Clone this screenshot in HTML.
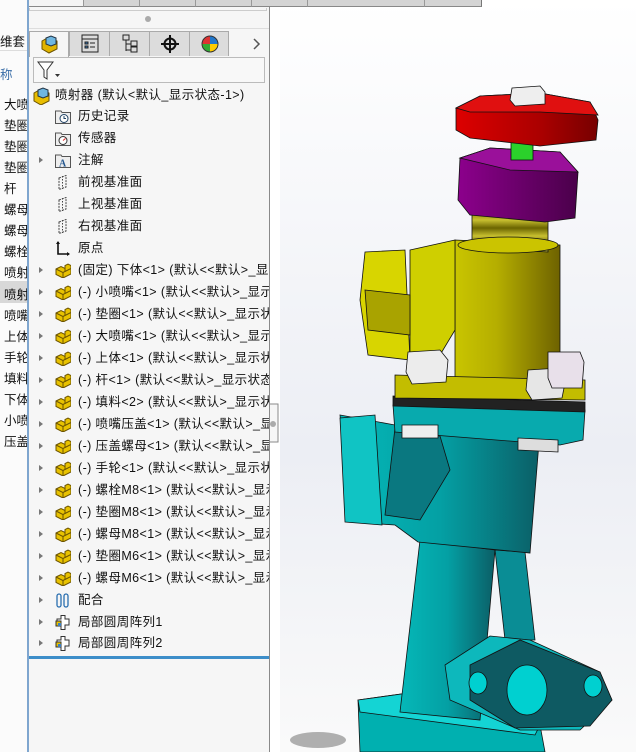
<!DOCTYPE html>
<html><head><meta charset="utf-8">
<style>
*{margin:0;padding:0;box-sizing:border-box}
body{width:636px;height:752px;overflow:hidden;position:relative;background:#fff;font-family:"Liberation Sans","Noto Sans CJK SC",sans-serif;font-size:12px;color:#111}
#strip{position:absolute;left:0;top:0;width:27px;height:752px;background:#fbfbfb;overflow:hidden}
#strip div{position:absolute;left:4px;white-space:nowrap;font-size:12.5px}
#sline{position:absolute;left:27px;top:0;width:2px;height:752px;background:#7fa6cf}
#panel{position:absolute;left:29px;top:0;width:241px;height:752px;background:#f6f6f6;border-right:1px solid #8a8a8a;overflow:hidden}
.tabtop{position:absolute;top:0;height:7px;background:#d4d4d4;border-right:1px solid #999;border-bottom:1px solid #888;z-index:5}
.row{position:absolute;left:0;height:20px;width:240px;white-space:nowrap;line-height:20px;font-size:12.5px;letter-spacing:.4px}
.row .ar{position:absolute;left:10px;top:7px;width:0;height:0;border-left:4px solid #777;border-top:3.5px solid transparent;border-bottom:3.5px solid transparent}
.row .ic{position:absolute;left:26px;top:3px;width:16px;height:15px}
.row .tx{position:absolute;left:49px;top:0}
</style></head><body>
<div id="strip">
<div style="top:31px;left:0">维套</div>
<div style="top:50px;left:0;width:27px;border-top:1px solid #ddd"></div>
<div style="top:64px;left:0;color:#3a6ea8">称</div>
<div style="top:94px">大喷</div><div style="top:115px">垫圈</div><div style="top:136px">垫圈</div><div style="top:157px">垫圈</div>
<div style="top:178px">杆</div><div style="top:199px">螺母</div><div style="top:220px">螺母</div><div style="top:241px">螺栓</div>
<div style="top:262px">喷射</div>
<div style="top:281px;left:0;width:27px;height:22px;background:#d8d8d8"></div>
<div style="top:284px">喷射</div><div style="top:305px">喷嘴</div><div style="top:326px">上体</div><div style="top:347px">手轮</div>
<div style="top:368px">填料</div><div style="top:389px">下体</div><div style="top:410px">小喷</div><div style="top:431px">压盖</div>
</div>
<div id="sline"></div>
<div id="panel">
 <div style="position:absolute;left:0;top:8px;width:238px;height:3px;border:1px solid #ccc;border-top:none"></div>
 <div style="position:absolute;left:116px;top:16px;width:6px;height:6px;border-radius:50%;background:#aaa"></div>
 <div style="position:absolute;left:0;top:28px;width:240px;height:1px;background:#ddd"></div>
 <div style="position:absolute;left:40px;top:31px;width:160px;height:25px;background:#dcdcdc;border:1px solid #aaa;border-bottom:none"></div>
 <div style="position:absolute;left:0;top:31px;width:40px;height:26px;background:#f6f6f6;border:1px solid #aaa;border-bottom:none"></div>
 <div style="position:absolute;left:80px;top:31px;width:1px;height:25px;background:#aaa"></div>
 <div style="position:absolute;left:120px;top:31px;width:1px;height:25px;background:#aaa"></div>
 <div style="position:absolute;left:160px;top:31px;width:1px;height:25px;background:#aaa"></div>
 <svg style="position:absolute;left:0;top:31px" width="240" height="26">
  <g transform="translate(12,4)"><path d="M1 6 L8 2 L16 6 L16 14 L8 18 L1 14Z" fill="#e0b400" stroke="#6a5200"/><path d="M5 3 L10 1 L15 3 L15 9 L10 11 L5 9Z" fill="#6fb6e0" stroke="#234"/></g>
  <g transform="translate(53,4)" stroke="#222" fill="none"><rect x="0" y="0" width="16" height="17"/><path d="M0 4H16"/><rect x="3" y="7" width="3" height="2" fill="#3a7fc0"/><path d="M8 8H13"/><rect x="3" y="11" width="3" height="2" fill="#3a7fc0"/><path d="M8 12H13"/></g>
  <g transform="translate(93,4)" stroke="#222" fill="none"><rect x="1" y="0" width="6" height="5"/><path d="M4 5V16M4 9H9M4 15H9"/><rect x="9" y="6" width="6" height="5"/><rect x="9" y="12" width="6" height="5"/></g>
  <g transform="translate(133,4)" stroke="#111" stroke-width="2" fill="none"><circle cx="8" cy="9" r="5.5"/><path d="M8 0V18M-1 9H17"/></g>
  <g transform="translate(172,4)"><circle cx="9" cy="9" r="8" fill="#d33"/><path d="M9 9 L1 9 A8 8 0 0 0 9 17Z" fill="#3a3"/><path d="M9 9 L9 17 A8 8 0 0 0 17 9Z" fill="#fc0"/><path d="M9 9L9 1 A8 8 0 0 1 17 9Z" fill="#27c"/><circle cx="9" cy="9" r="8" fill="none" stroke="#333"/></g>
  <path d="M225 8 L230 13 L225 18" stroke="#555" stroke-width="1.5" fill="none"/>
 </svg>
 <div style="position:absolute;left:4px;top:57px;width:232px;height:26px;border:1px solid #bbb;background:#f8f8f8"></div>
 <svg style="position:absolute;left:8px;top:61px" width="26" height="20"><path d="M1 1H16L10 9V18L7 16V9Z" fill="#fff" stroke="#333"/><path d="M18 13L23 13L20.5 16Z" fill="#333"/></svg>

 <div class="row" style="top:85px"><svg style="position:absolute;left:4px;top:2px" width="18" height="18"><path d="M1 6 L8 2 L16 6 L16 14 L8 18 L1 14Z" fill="#e8bd00" stroke="#6a5200"/><path d="M5 3 L10 1 L15 3 L15 9 L10 11 L5 9Z" fill="#6fb6e0" stroke="#234"/></svg><span class="tx" style="left:26px">喷射器 (默认&lt;默认_显示状态-1&gt;)</span></div>
 <div class="row" style="top:106px"><svg class="ic" viewBox="0 0 16 15"><path d="M0.5 2H6L7 3.5H15.5V14.5H0.5Z" fill="#eee" stroke="#555"/><circle cx="9" cy="9.5" r="4" fill="#fff" stroke="#246"/><path d="M9 7V9.5H11" stroke="#246" fill="none"/></svg><span class="tx">历史记录</span></div>
 <div class="row" style="top:128px"><svg class="ic" viewBox="0 0 16 15"><path d="M0.5 2H6L7 3.5H15.5V14.5H0.5Z" fill="#eee" stroke="#555"/><circle cx="8" cy="9.5" r="4" fill="#fff" stroke="#333"/><path d="M8 9.5L10.5 7.5" stroke="#d22"/></svg><span class="tx">传感器</span></div>
 <div class="row" style="top:150px"><i class="ar"></i><svg class="ic" viewBox="0 0 16 15"><path d="M0.5 2H6L7 3.5H15.5V14.5H0.5Z" fill="#eee" stroke="#555"/><text x="4" y="13.5" font-size="10" font-weight="bold" fill="#25578f" font-family="Liberation Serif">A</text></svg><span class="tx">注解</span></div>
 <div class="row" style="top:172px"><svg class="ic" viewBox="0 0 16 15"><path d="M4 3 L11 0.5 V12 L4 14.5Z" fill="none" stroke="#444" stroke-dasharray="2 1"/><path d="M7.5 1V14" stroke="#444" stroke-dasharray="1.5 1.5"/></svg><span class="tx">前视基准面</span></div>
 <div class="row" style="top:194px"><svg class="ic" viewBox="0 0 16 15"><path d="M4 3 L11 0.5 V12 L4 14.5Z" fill="none" stroke="#444" stroke-dasharray="2 1"/><path d="M7.5 1V14" stroke="#444" stroke-dasharray="1.5 1.5"/></svg><span class="tx">上视基准面</span></div>
 <div class="row" style="top:216px"><svg class="ic" viewBox="0 0 16 15"><path d="M4 3 L11 0.5 V12 L4 14.5Z" fill="none" stroke="#444" stroke-dasharray="2 1"/><path d="M7.5 1V14" stroke="#444" stroke-dasharray="1.5 1.5"/></svg><span class="tx">右视基准面</span></div>
 <div class="row" style="top:238px"><svg class="ic" viewBox="0 0 16 15"><path d="M3 1V13H14" stroke="#111" stroke-width="1.6" fill="none"/><path d="M1 3L3 0 5 3M12 11L15 13 12 15" fill="#111"/></svg><span class="tx">原点</span></div>
 <div id="parts"></div>
</div>
<svg style="position:absolute;left:270px;top:396px" width="10" height="50"><path d="M0 8H8V46H0" fill="#f6f6f6" stroke="#8a8a8a"/><circle cx="3" cy="28" r="3" fill="#aaa"/></svg>

<svg style="position:absolute;left:280px;top:0" width="356" height="752" viewBox="280 0 356 752">
<defs>
 <linearGradient id="bg" x1="0" y1="0" x2="0" y2="1"><stop offset="0" stop-color="#fff"/><stop offset=".6" stop-color="#eceef4"/><stop offset="1" stop-color="#fafafa"/></linearGradient>
 <linearGradient id="yel" x1="0" x2="1"><stop offset="0" stop-color="#c9c500"/><stop offset=".4" stop-color="#b5ae00"/><stop offset="1" stop-color="#6e6200"/></linearGradient>
 <linearGradient id="cy" x1="0" x2="1"><stop offset="0" stop-color="#05b8b8"/><stop offset=".5" stop-color="#04a0a4"/><stop offset="1" stop-color="#0b5e66"/></linearGradient>
 <linearGradient id="red" x1="0" x2="1"><stop offset="0" stop-color="#d00"/><stop offset=".6" stop-color="#a00"/><stop offset="1" stop-color="#700"/></linearGradient>
 <linearGradient id="pur" x1="0" x2="1"><stop offset="0" stop-color="#8c008c"/><stop offset="1" stop-color="#4a004a"/></linearGradient>
 <linearGradient id="thr" x1="0" y1="0" x2="0" y2="1"><stop offset="0" stop-color="#8a8500"/><stop offset=".2" stop-color="#c8c030"/><stop offset=".4" stop-color="#6a6400"/><stop offset=".6" stop-color="#c8c030"/><stop offset=".8" stop-color="#6a6400"/><stop offset="1" stop-color="#c8c030"/></linearGradient>
</defs>
<rect x="280" y="0" width="356" height="752" fill="url(#bg)"/>
<ellipse cx="318" cy="740" rx="28" ry="8" fill="#555" opacity=".45"/>
<g stroke="#111" stroke-width=".8">
<path d="M358 700 L430 690 L540 725 L545 752 L360 752 Z" fill="#00b0b0"/>
<path d="M358 700 L430 690 L540 725 L535 735 L360 712Z" fill="#14d4d4"/>
<path d="M420 540 L495 550 L480 720 L400 712 Z" fill="url(#cy)"/>
<path d="M495 550 L525 552 L535 640 L505 640Z" fill="#0a8d95"/>
<path d="M445 665 L490 636 L530 640 L600 672 L612 700 L580 730 L520 730 L450 700 Z" fill="#0db8bc"/>
<path d="M470 665 L520 640 L600 672 L612 700 L590 726 L515 728 L470 700Z" fill="#0e5a62"/>
<ellipse cx="527" cy="690" rx="20" ry="25" fill="#00d0d0"/>
<ellipse cx="478" cy="683" rx="9" ry="11" fill="#00d0d0"/>
<ellipse cx="593" cy="686" rx="9" ry="11" fill="#00d0d0"/>
<path d="M340 415 L395 425 L420 420 L540 430 L530 553 L418 542 L395 525 L350 522Z" fill="url(#cy)"/>
<path d="M340 418 L375 415 L382 525 L345 522 Z" fill="#10c4c4"/>
<path d="M395 428 L440 436 L450 470 L420 520 L385 515Z" fill="#0a7880"/>
<path d="M393 405 L585 410 L583 440 L560 445 L395 432Z" fill="#08aaae"/>
<path d="M393 396 L585 402 L585 412 L393 406Z" fill="#222"/>
<path d="M455 240 L560 245 L560 390 L455 390Z" fill="url(#yel)"/>
<path d="M410 250 L455 240 L455 330 L440 355 L410 360Z" fill="#cfcf00"/>
<path d="M365 252 L405 250 L410 360 L368 355 L360 300Z" fill="#d8d500"/>
<path d="M365 290 L410 295 L410 335 L368 330Z" fill="#a9a300"/>
<path d="M395 375 L585 380 L585 400 L395 398Z" fill="#c3bd00"/>
<path d="M472 212 L548 215 L548 252 L472 248Z" fill="url(#thr)"/>
<ellipse cx="508" cy="245" rx="50" ry="8" fill="#cbc400"/>
<path d="M460 158 L490 148 L560 152 L578 172 L575 218 L545 222 L470 215 L458 200Z" fill="url(#pur)"/>
<path d="M460 158 L490 148 L560 152 L578 172 L510 170 Z" fill="#9a109a"/>
<rect x="511" y="138" width="22" height="22" fill="#2bd12b"/>
<path d="M456 108 L480 96 L540 93 L590 102 L598 120 L596 140 L540 146 L470 138 L456 130Z" fill="url(#red)"/>
<path d="M456 108 L480 96 L540 93 L590 102 L598 115 L540 112 L470 112Z" fill="#e01010"/>
<path d="M512 88 L540 86 L545 92 L545 104 L515 106 L510 100Z" fill="#eee"/>
<path d="M408 352 L440 350 L448 360 L446 382 L412 384 L406 372Z" fill="#ececec"/>
<path d="M528 370 L560 368 L566 378 L562 398 L532 400 L526 390Z" fill="#e6e6e6"/>
<path d="M548 352 L580 352 L584 362 L582 388 L552 388 L548 378Z" fill="#e8e0ea"/>
<path d="M402 425 L438 425 L438 438 L402 438Z" fill="#eee"/>
<path d="M518 438 L558 440 L558 452 L518 450Z" fill="#ddd"/>
</g>
</svg>
<div class="tabtop" style="left:29px;width:55px;background:#f4f4f4"></div>
<div class="tabtop" style="left:84px;width:56px"></div>
<div class="tabtop" style="left:140px;width:56px"></div>
<div class="tabtop" style="left:196px;width:56px"></div>
<div class="tabtop" style="left:252px;width:56px"></div>
<div class="tabtop" style="left:308px;width:117px"></div>
<div class="tabtop" style="left:425px;width:57px;border-right:1px solid #777"></div>
<script>
var items=["(固定) 下体&lt;1&gt; (默认&lt;&lt;默认&gt;_显示状态-1&gt;)","(-) 小喷嘴&lt;1&gt; (默认&lt;&lt;默认&gt;_显示状态-1&gt;)","(-) 垫圈&lt;1&gt; (默认&lt;&lt;默认&gt;_显示状态-1&gt;)","(-) 大喷嘴&lt;1&gt; (默认&lt;&lt;默认&gt;_显示状态-1&gt;)","(-) 上体&lt;1&gt; (默认&lt;&lt;默认&gt;_显示状态-1&gt;)","(-) 杆&lt;1&gt; (默认&lt;&lt;默认&gt;_显示状态-1&gt;)","(-) 填料&lt;2&gt; (默认&lt;&lt;默认&gt;_显示状态-1&gt;)","(-) 喷嘴压盖&lt;1&gt; (默认&lt;&lt;默认&gt;_显示状态-1&gt;)","(-) 压盖螺母&lt;1&gt; (默认&lt;&lt;默认&gt;_显示状态-1&gt;)","(-) 手轮&lt;1&gt; (默认&lt;&lt;默认&gt;_显示状态-1&gt;)","(-) 螺栓M8&lt;1&gt; (默认&lt;&lt;默认&gt;_显示状态-1&gt;)","(-) 垫圈M8&lt;1&gt; (默认&lt;&lt;默认&gt;_显示状态-1&gt;)","(-) 螺母M8&lt;1&gt; (默认&lt;&lt;默认&gt;_显示状态-1&gt;)","(-) 垫圈M6&lt;1&gt; (默认&lt;&lt;默认&gt;_显示状态-1&gt;)","(-) 螺母M6&lt;1&gt; (默认&lt;&lt;默认&gt;_显示状态-1&gt;)"];
var h="",part='<svg class="ic" viewBox="0 0 16 15"><path d="M1 6 L6 3.5 L10 5.5 L10 2.5 L13 1 L16 2.5 L16 11 L8 15 L1 11.5Z" fill="#e8c200" stroke="#6a5200"/><path d="M1 6 L8 9.5 L8 15 M8 9.5 L10 8.5 V5.5 M10 8.5 L16 5.5" fill="none" stroke="#6a5200"/></svg>';
for(var i=0;i<items.length;i++){h+='<div class="row" style="top:'+(260+i*22)+'px"><i class="ar"></i>'+part+'<span class="tx">'+items[i]+'</span></div>';}
var y=260+items.length*22;
h+='<div class="row" style="top:'+y+'px"><i class="ar"></i><svg class="ic" viewBox="0 0 16 15"><rect x="2" y="1" width="4" height="13" rx="2" fill="none" stroke="#2a6fb0" stroke-width="1.3"/><rect x="9" y="1" width="4" height="13" rx="2" fill="none" stroke="#2a6fb0" stroke-width="1.3"/></svg><span class="tx">配合</span></div>';
var pat='<svg class="ic" viewBox="0 0 16 15"><path d="M6 0.5H10V4H14V10H10V14.5H6V10H2V4H6Z" fill="#fff" stroke="#333"/><rect x="1" y="6" width="5" height="5" fill="#e8c200" stroke="#333"/><rect x="3" y="8" width="3" height="3" fill="#3a7fc0"/></svg>';
h+='<div class="row" style="top:'+(y+22)+'px"><i class="ar"></i>'+pat+'<span class="tx">局部圆周阵列1</span></div>';
h+='<div class="row" style="top:'+(y+43)+'px"><i class="ar"></i>'+pat+'<span class="tx">局部圆周阵列2</span></div>';
h+='<div style="position:absolute;left:0;top:'+(y+66)+'px;width:240px;height:3px;background:#3d8ec9"></div>';
document.getElementById("parts").innerHTML=h;
</script>
</body></html>
